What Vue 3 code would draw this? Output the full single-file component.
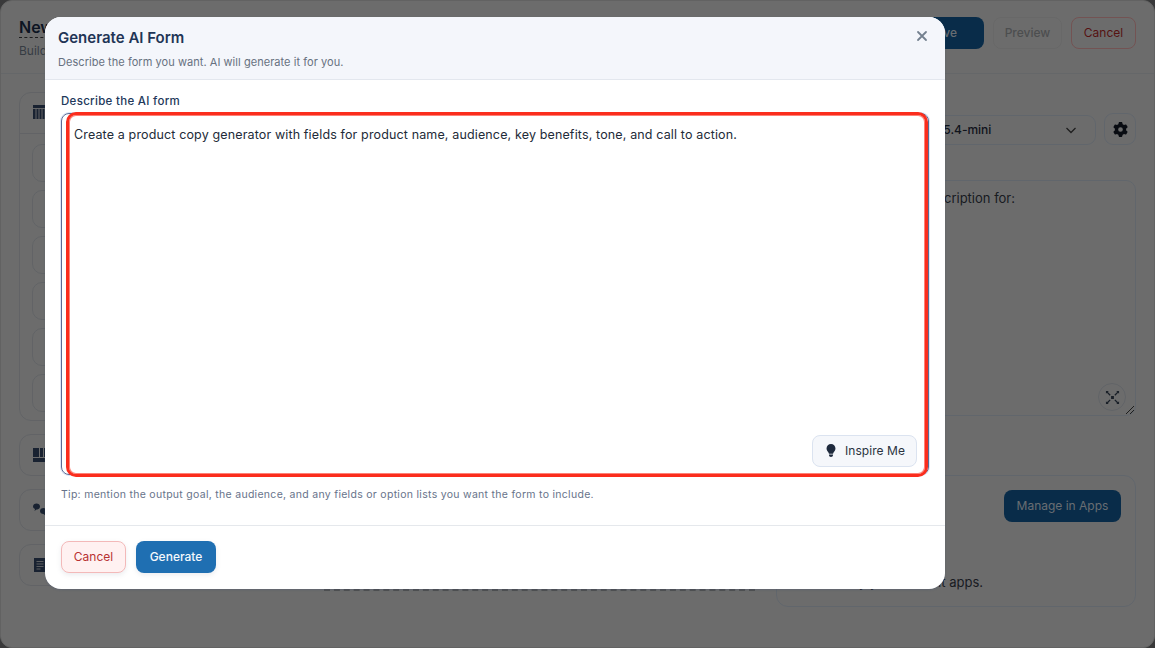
<script setup>
const gear = "M495.9 166.6c3.2 8.7 .5 18.4-6.4 24.6l-43.3 39.4c1.1 8.3 1.7 16.8 1.7 25.4s-.6 17.1-1.7 25.4l43.3 39.4c6.9 6.2 9.6 15.9 6.4 24.6c-4.4 11.9-9.7 23.3-15.8 34.3l-4.7 8.1c-6.6 11-14 21.4-22.1 31.2c-5.9 7.2-15.7 9.6-24.5 6.8l-55.7-17.7c-13.4 10.3-28.2 18.9-44 25.4l-12.5 57.1c-2 9.1-9 16.3-18.2 17.8c-13.8 2.3-28 3.5-42.5 3.5s-28.7-1.2-42.5-3.5c-9.2-1.5-16.2-8.7-18.2-17.8l-12.5-57.1c-15.8-6.5-30.6-15.1-44-25.4L83.1 425.9c-8.8 2.8-18.6 .3-24.5-6.8c-8.1-9.8-15.5-20.2-22.1-31.2l-4.7-8.1c-6.1-11-11.4-22.4-15.8-34.3c-3.2-8.7-.5-18.4 6.4-24.6l43.3-39.4C64.6 273.1 64 264.6 64 256s.6-17.1 1.7-25.4L22.4 191.2c-6.9-6.2-9.6-15.9-6.4-24.6c4.4-11.9 9.7-23.3 15.8-34.3l4.7-8.1c6.6-11 14-21.4 22.1-31.2c5.9-7.2 15.7-9.6 24.5-6.8l55.7 17.7c13.4-10.3 28.2-18.9 44-25.4l12.5-57.1c2-9.1 9-16.3 18.2-17.8C227.3 1.2 241.5 0 256 0s28.7 1.2 42.5 3.5c9.2 1.5 16.2 8.7 18.2 17.8l12.5 57.1c15.8 6.5 30.6 15.1 44 25.4l55.7-17.7c8.8-2.8 18.6-.3 24.5 6.8c8.1 9.8 15.5 20.2 22.1 31.2l4.7 8.1c6.1 11 11.4 22.4 15.8 34.3zM256 336a80 80 0 1 0 0-160 80 80 0 1 0 0 160z";
const bulb = "M272 384c9.6-31.9 29.5-59.1 49.2-86.2c5.2-7.1 10.4-14.2 15.4-21.4c19.8-28.5 31.4-63 31.4-100.3C368 78.8 289.2 0 192 0S16 78.8 16 176c0 37.3 11.6 71.9 31.4 100.3c5 7.2 10.2 14.3 15.4 21.4c19.8 27.1 39.7 54.4 49.2 86.2H272zM192 512c44.2 0 80-35.8 80-80V416H112v16c0 44.2 35.8 80 80 80z";
const fields = [1, 2, 3, 4, 5, 6];
</script>

<template>
  <div class="stage">
    <div class="page">
      <header class="top">
        <div class="title-block">
          <h1 class="name">New</h1>
          <p class="sub">Build</p>
        </div>
        <div class="actions">
          <button class="btn save">Save</button>
          <button class="btn preview">Preview</button>
          <button class="btn danger">Cancel</button>
        </div>
      </header>
      <main class="cols">
        <section class="left">
          <div class="card first">
            <div class="card-head">
              <svg class="ico" viewBox="0 0 14 14"><path d="M0 0h14v14H0z" fill="#2a3a52" /><path d="M0 3.500h14M3 3.500V14M6 3.500V14M9 3.500V14M12 3.500V14" fill="none" stroke="#b5b5b5" stroke-width=".9" /></svg>
            </div>
            <div class="field-list">
              <div v-for="f in fields" :key="f" class="field"></div>
            </div>
          </div>
          <div class="card small">
            <svg class="ico" viewBox="0 0 14 14"><path d="M0 0h6v9H0zM7 0h3v9H7zM11 0h3v9h-3zM0 10h14v4H0z" fill="#2a3a52" /></svg>
          </div>
          <div class="card small">
            <svg class="ico" viewBox="0 0 14 14"><path d="M3.500 0.500c2 0 3.500 1.300 3.500 3s-1.500 3-3.500 3L1.500 8 2 6C0.800 5.500 0 4.600 0 3.500c0-1.700 1.500-3 3.500-3z" fill="#2a3a52" /><path d="M10.500 5c2 0 3.500 1.300 3.500 3 0 1.100-.6 2-1.600 2.500l.6 2.500-2.500-2c-2 0-3.500-1.300-3.500-3s1.500-3 3.500-3z" fill="#2a3a52" /></svg>
          </div>
          <div class="card small">
            <svg class="ico" viewBox="0 0 14 14"><path d="M1 0h12v14H1z" fill="#2a3a52" /><path d="M3.500 3.500h7M3.500 6h7M3.500 8.500h7M3.500 11h4" fill="none" stroke="#b5b5b5" stroke-width=".8" /></svg>
          </div>
          <div class="dashes"></div>
        </section>
        <section class="right">
          <div class="model-row">
            <div class="select">
              <span>gpt-5.4-mini</span>
              <svg class="chev" viewBox="0 0 12 12"><path d="M1.500 4l4.500 4.500L10.500 4" fill="none" stroke="#333" stroke-width="1.300" /></svg>
            </div>
            <div class="gear-btn"><svg viewBox="0 0 512 512"><path :d="gear" fill="#10151f" /></svg></div>
          </div>
          <div class="prompt">
            <span>Write a short description for:</span>
            <div class="expand">
              <svg viewBox="0 0 16 16"><path d="M1 1h3l-1 1 3 3-1 1-3-3-1 1zM15 1v3l-1-1-3 3-1-1 3-3-1-1zM1 15v-3l1 1 3-3 1 1-3 3 1 1zM15 15h-3l1-1-3-3 1-1 3 3 1-1zM6.500 6.500h3v3h-3z" fill="#2a3442" /></svg>
            </div>
            <svg class="grip" viewBox="0 0 10 10"><path d="M1 9l8-8M5 9l4-4" stroke="#333" stroke-width="1" /></svg>
          </div>
          <div class="apps-card">
            <div class="apps-top"><button class="btn manage">Manage in Apps</button></div>
            <p class="apps-note">Used by your current apps.</p>
          </div>
        </section>
      </main>
    </div>

    <div class="overlay"></div>

    <div class="modal">
      <div class="m-head">
        <h2>Generate AI Form</h2>
        <p>Describe the form you want. AI will generate it for you.</p>
        <svg class="close" viewBox="0 0 12 12"><path d="M2 2l8 8M10 2l-8 8" stroke="#74808f" stroke-width="1.800" stroke-linecap="round" /></svg>
      </div>
      <div class="m-body">
        <label class="lbl">Describe the AI form</label>
        <div class="ta">
          <span class="ta-text">Create a product copy generator with fields for product name, audience, key benefits, tone, and call to action.</span>
          <button class="inspire">
            <svg viewBox="0 0 384 512"><path :d="bulb" fill="#1e2a3d" /></svg>
            Inspire Me
          </button>
          <div class="redbox"></div>
        </div>
        <p class="tip">Tip: mention the output goal, the audience, and any fields or option lists you want the form to include.</p>
      </div>
      <div class="m-foot">
        <button class="btn m-cancel">Cancel</button>
        <button class="btn m-gen">Generate</button>
      </div>
    </div>
  </div>
</template>

<style>
html, body { margin: 0; background: #5f6061; }
</style>

<style scoped>
* { box-sizing: border-box; }
.stage {
  position: relative;
  width: 1155px;
  height: 648px;
  overflow: hidden;
  font-family: Inter, "Liberation Sans", sans-serif;
}
.page {
  height: 100%;
  background: #b5b5b5;
  border-radius: 12px;
  border: 1px solid #a4a4a4;
  overflow: hidden;
}
.top {
  height: 73px;
  padding: 16px 18px 0 18px;
  display: flex;
  justify-content: space-between;
  border-bottom: 1px solid #a8acb0;
}
.title-block { min-width: 0; }
.name {
  margin: 0;
  font-size: 16px;
  line-height: 20px;
  font-weight: 600;
  color: #14233a;
  border-bottom: 1px dashed #333;
  width: max-content;
}
.sub { margin: 5px 0 0; font-size: 12px; color: #5b6470; }
.actions { display: flex; gap: 9px; }
.btn {
  font-family: inherit;
  font-size: 12px;
  font-weight: 500;
  height: 32px;
  border-radius: 8px;
  border: 1px solid transparent;
  padding: 0 0 2px;
}
.save { width: 100px; background: #0f4a7a; color: #aeb6be; padding-left: 18px; }
.preview { width: 69px; background: #b5b5b5; color: #7f8284; border-color: #adadad; }
.danger { width: 65px; background: #b5b5b5; color: #8f1e1e; border-color: #c08a8a; font-weight: 400; }
.cols {
  display: grid;
  grid-template-columns: 736px 360px;
  gap: 21px;
  padding: 18px 18px 0;
}
.left { display: flex; flex-direction: column; gap: 13px; }
.card {
  border: 1px solid #a3a6aa;
  border-radius: 12px;
  padding: 0 13px;
}
.first { height: 329px; padding: 0; }
.card-head { height: 41px; padding: 12px 13px 0; border-bottom: 1px solid #a3a6aa; }
.field-list { padding: 10px 12px; display: flex; flex-direction: column; gap: 8px; }
.field { height: 38px; border: 1px solid #a3a6aa; border-radius: 10px; }
.ico { display: block; width: 14px; height: 14px; }
.small { height: 42px; display: flex; align-items: center; }
.dashes { margin: -10px 0 0 305px; border-top: 2px dashed #868686; }
.right { display: flex; flex-direction: column; }
.model-row { margin-top: 21px; display: flex; gap: 8px; }
.select {
  width: 320px;
  height: 30px;
  margin-top: 2px;
  border: 1px solid #a2aab4;
  border-radius: 9px;
  padding: 0 18px 2px 142px;
  display: flex;
  align-items: center;
  justify-content: space-between;
  font-size: 12px;
  font-weight: 500;
  color: #1a2230;
}
.chev { width: 12px; height: 12px; margin-top: 2px; }
.gear-btn {
  width: 32px;
  height: 32px;
  border: 1px solid #a2aab4;
  border-radius: 9px;
  display: flex;
  align-items: center;
  justify-content: center;
}
.gear-btn svg { width: 15px; height: 15px; }
.prompt {
  position: relative;
  margin-top: 35px;
  height: 236px;
  border: 1px solid #a2aab4;
  border-radius: 10px;
  padding: 9px 13px;
  font-size: 13px;
  color: #2a2f38;
  text-align: right;
}
.prompt span { position: relative; right: 107px; }
.expand {
  position: absolute;
  right: 9px;
  bottom: 4px;
  width: 28px;
  height: 28px;
  border: 1px solid #a2a6ac;
  border-radius: 50%;
  display: flex;
  align-items: center;
  justify-content: center;
}
.expand svg { width: 15px; height: 15px; }
.grip { position: absolute; right: 0; bottom: 0; width: 10px; height: 10px; }
.apps-card {
  margin-top: 59px;
  height: 132px;
  border: 1px solid #a2aab4;
  border-radius: 12px;
  padding: 14px 14px;
}
.apps-top { display: flex; justify-content: flex-end; }
.manage { width: 117px; background: #0f4a7a; color: #aeb6be; font-weight: 400; }
.apps-note { margin: 52px 0 0; font-size: 13px; color: #2a2f38; text-align: right; padding-right: 138px; white-space: nowrap; }
.overlay {
  position: absolute;
  inset: 0;
  background: rgba(0, 0, 0, 0.4);
}
.modal {
  position: absolute;
  left: 45px;
  top: 17px;
  width: 900px;
  height: 572px;
  background: #fff;
  border-radius: 16px;
  overflow: hidden;
  display: flex;
  flex-direction: column;
  box-shadow: 0 1px 2px rgba(60, 80, 120, 0.25);
}
.m-head {
  position: relative;
  height: 63px;
  background: #f4f6fb;
  border-bottom: 1px solid #e3e7ee;
  padding: 11px 13px 0;
}
.m-head h2 { margin: 0; font-size: 15px; line-height: 20px; font-weight: 600; color: #1f3556; }
.m-head p { margin: 7px 0 0; font-size: 11px; line-height: 14px; color: #67717f; letter-spacing: .05px; }
.close { position: absolute; right: 17px; top: 13px; width: 12px; height: 12px; }
.m-body { flex: 1; padding: 14px 16px 0; }
.lbl { display: block; font-size: 11.500px; line-height: 15px; font-weight: 500; color: #22385a; letter-spacing: .3px; }
.ta {
  position: relative;
  margin-top: 4px;
  height: 362px;
  border: 1px solid #5a6b94;
  border-radius: 8px;
  box-shadow: 0 0 0 1px #dbe6f7;
  padding: 12px 12px;
  font-size: 12.500px;
  line-height: 18px;
  color: #222b38;
}
.ta-text { letter-spacing: .14px; }
.inspire {
  position: absolute;
  right: 11px;
  bottom: 7px;
  width: 105px;
  height: 32px;
  border: 1px solid #dbe3f0;
  border-radius: 8px;
  background: #f5f7fb;
  font-family: inherit;
  font-size: 12px;
  color: #2a3340;
  display: flex;
  align-items: center;
  justify-content: center;
  gap: 9px;
  padding: 0 0 2px 2px;
  letter-spacing: .05px;
}
.inspire svg { width: 10px; height: 13px; }
.redbox {
  position: absolute;
  left: 4px;
  top: -2px;
  width: 862px;
  height: 365px;
  border: 3px solid #fb2d1d;
  border-radius: 10px;
  box-shadow: inset 0 0 0 1px rgba(251, 45, 29, .6);
  pointer-events: none;
}
.tip { margin: 13px 0 0; font-size: 10.500px; line-height: 14px; color: #67738a; letter-spacing: .29px; }
.m-foot {
  height: 64px;
  border-top: 1px solid #e5e8ec;
  padding: 15px 16px 0;
  display: flex;
  gap: 10px;
}
.m-cancel { width: 65px; background: #fff1f1; color: #b83232; border-color: #f3b9b9; font-weight: 400; box-shadow: 0 2px 5px rgba(120, 130, 150, .15); }
.m-gen { width: 80px; background: #1f6fb2; color: #f4f8fc; box-shadow: 0 2px 5px rgba(120, 130, 150, .15); }
</style>
